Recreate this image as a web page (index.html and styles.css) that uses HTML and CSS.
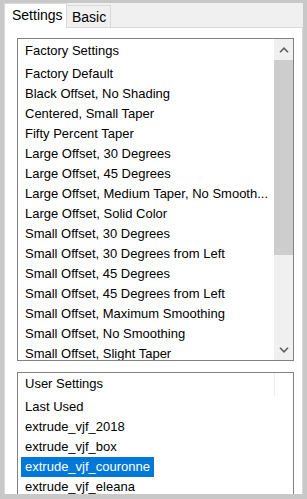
FILE: index.html
```html
<!DOCTYPE html>
<html lang="en">
<head>
    <meta charset="UTF-8">
    <title>Extrude Presets</title>
    <link rel="stylesheet" href="styles.css">
</head>
<body>
    <div class="window">
        <div class="tabs">
            <div class="tab active">Settings</div>
            <div class="tab">Basic</div>
        </div>
        <div class="panel">
            <div class="listbox presets">
                <div class="list-body">
                    <div class="group">Factory Settings</div>
                    <div class="item">Factory Default</div>
                    <div class="item">Black Offset, No Shading</div>
                    <div class="item">Centered, Small Taper</div>
                    <div class="item">Fifty Percent Taper</div>
                    <div class="item">Large Offset, 30 Degrees</div>
                    <div class="item">Large Offset, 45 Degrees</div>
                    <div class="item">Large Offset, Medium Taper, No Smooth...</div>
                    <div class="item">Large Offset, Solid Color</div>
                    <div class="item">Small Offset, 30 Degrees</div>
                    <div class="item">Small Offset, 30 Degrees from Left</div>
                    <div class="item">Small Offset, 45 Degrees</div>
                    <div class="item">Small Offset, 45 Degrees from Left</div>
                    <div class="item">Small Offset, Maximum Smoothing</div>
                    <div class="item">Small Offset, No Smoothing</div>
                    <div class="item">Small Offset, Slight Taper</div>
                </div>
                <div class="scrollbar">
                    <div class="arrow">
                        <svg width="10" height="6" viewBox="0 0 10 6"><path d="M1 5.2 L5 1.2 L9 5.2" fill="none" stroke="#606060" stroke-width="1.6"/></svg>
                    </div>
                    <div class="track"><div class="thumb"></div></div>
                    <div class="arrow">
                        <svg width="10" height="6" viewBox="0 0 10 6"><path d="M1 0.8 L5 4.8 L9 0.8" fill="none" stroke="#606060" stroke-width="1.6"/></svg>
                    </div>
                </div>
            </div>
            <div class="listbox user">
                <div class="list-body">
                    <div class="group">User Settings</div>
                    <div class="item">Last Used</div>
                    <div class="item">extrude_vjf_2018</div>
                    <div class="item">extrude_vjf_box</div>
                    <div class="item selected">extrude_vjf_couronne</div>
                    <div class="item">extrude_vjf_eleana</div>
                </div>
                <div class="gutter"></div>
            </div>
        </div>
    </div>
</body>
</html>
```

FILE: styles.css
```css
body {
    margin: 0;
    height: 499px;
    overflow: hidden;
    background-color: #c8c8c8;
    font-family: "Liberation Sans", Arial, sans-serif;
    font-size: 13px;
    color: #000;
}

.window {
    margin: 3px 4px 0 4px;
    height: 491px;
    display: flex;
    flex-direction: column;
    overflow: hidden;
    background: #fff;
}

.tabs {
    display: flex;
    align-items: flex-end;
    height: 24px;
    background: #f0f0f0;
    position: relative;
    z-index: 1;
}

.tab {
    box-sizing: border-box;
    height: 22px;
    padding: 3px 5px 0 5px;
    border: 1px solid #d9d9d9;
    border-bottom: none;
    background: #f0f0f0;
    font-size: 14px;
}

.tab.active {
    height: 25px;
    width: 63px;
    margin-bottom: -1px;
    padding: 3px 0 0 7px;
    background: #fff;
}

.tab + .tab {
    border-left: none;
    width: 44px;
}

.panel {
    flex: 1;
    display: flex;
    flex-direction: column;
    gap: 11px;
    padding: 10px 8px 0 12px;
    border: 1px solid #d9d9d9;
    border-bottom: none;
    overflow: hidden;
}

.listbox {
    box-sizing: border-box;
    width: 277px;
    display: flex;
    border: 1px solid #828282;
    background: #fff;
    flex-shrink: 0;
}

.presets {
    height: 323px;
}

.user {
    height: 140px;
}

.list-body {
    flex: 1;
    min-width: 0;
    overflow: hidden;
    padding: 1px 0 0 3px;
}

.presets .list-body {
    padding-top: 2px;
}

.group,
.item {
    height: 20px;
    line-height: 20px;
    padding: 0 4px;
    white-space: nowrap;
    overflow: hidden;
}

.group {
    margin-bottom: 3px;
}

.item.selected {
    display: inline-block;
    background: #0078d7;
    color: #fff;
    vertical-align: top;
}

.scrollbar {
    width: 19px;
    display: flex;
    flex-direction: column;
    background: #f0f0f0;
}

.arrow {
    height: 21px;
    display: flex;
    align-items: center;
    justify-content: center;
}

.track {
    flex: 1;
}

.thumb {
    height: 195px;
    background: #cdcdcd;
}

.gutter {
    width: 19px;
    height: 23px;
    border-left: 1px solid #ececec;
    box-sizing: border-box;
}
```
